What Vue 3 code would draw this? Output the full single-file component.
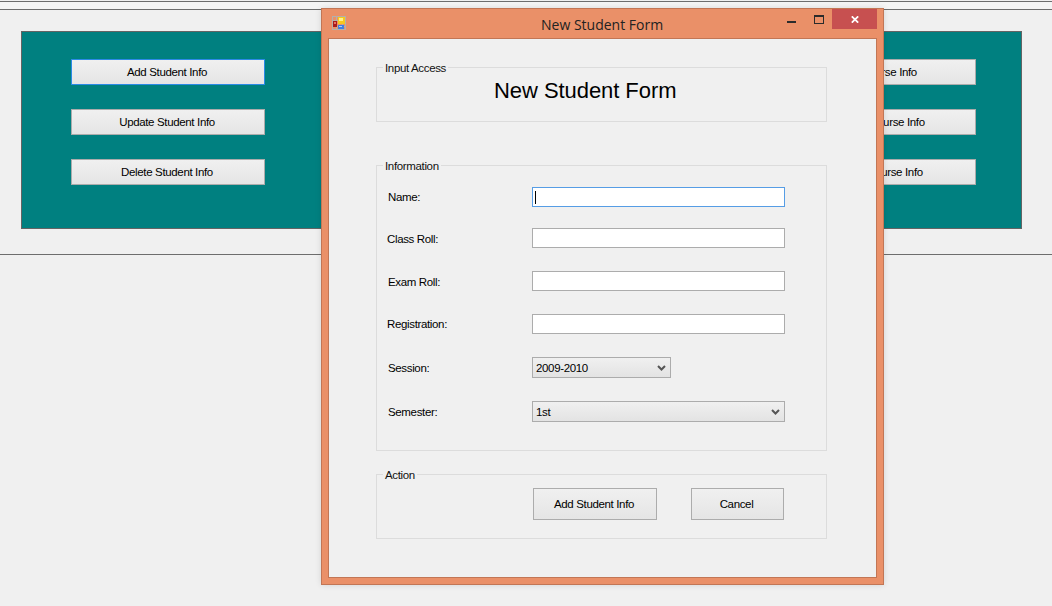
<template>
  <div class="page">
    <div class="menu-strip"></div>

    <div class="top-area">
      <div class="teal-panel">
        <div v-for="col in panelColumns" :key="col.id" class="btn-col">
          <div
            v-for="b in col.buttons"
            :key="b"
            class="win-btn panel-btn"
            :class="{ 'win-btn--focus': b === 'Add Student Info' }"
          >
            {{ b }}
          </div>
        </div>
      </div>
    </div>

    <!-- Modal window -->
    <div class="window">
      <div class="titlebar">
        <svg class="app-icon" width="14" height="14" viewBox="0 0 14 14">
          <rect x="0.5" y="0.5" width="13" height="13" fill="none" stroke="#b4b0aa" />
          <path d="M0 4.5H14M0 10.5H14M4.5 0V14M10.5 0V14" stroke="#b4b0aa" fill="none" />
          <rect x="1" y="5" width="4" height="6" fill="#a81c1c" />
          <rect x="2" y="6" width="2" height="2" fill="#e87060" />
          <rect x="6" y="1" width="7" height="7" fill="#f6c81e" />
          <rect x="7" y="2" width="4" height="3" fill="#fff08a" />
          <rect x="6" y="9" width="6" height="4" fill="#3f7fe0" />
          <rect x="7" y="10" width="3" height="1" fill="#a8ccf6" />
        </svg>
        <span class="window-title">New Student Form</span>
        <div class="caption-btns">
          <svg class="cap-min" width="9" height="2" viewBox="0 0 9 2">
            <rect width="9" height="2" fill="#2b2b2b" />
          </svg>
          <svg class="cap-max" width="10" height="9" viewBox="0 0 10 9">
            <rect x="0.5" y="0.5" width="9" height="8" fill="none" stroke="#2b2b2b" />
            <rect x="0" y="0" width="10" height="2" fill="#2b2b2b" />
          </svg>
          <div class="cap-close">
            <svg width="8" height="7" viewBox="0 0 8 7">
              <path d="M0.8 0.3L7.2 6.7M7.2 0.3L0.8 6.7" stroke="#fff" stroke-width="1.7" fill="none" />
            </svg>
          </div>
        </div>
      </div>

      <div class="client">
        <div class="group group--access">
          <span class="group-label">Input Access</span>
          <div class="form-heading">New Student Form</div>
        </div>

        <div class="group group--info">
          <span class="group-label">Information</span>
          <div class="form-grid">
            <template v-for="f in fields" :key="f.label">
              <div class="field-label" :class="{ 'field-label--up': f.up, 'field-label--left': f.left }">{{ f.label }}</div>
              <div v-if="f.type === 'text'" class="text-box" :class="{ 'text-box--focus': f.focus }">
                <span v-if="f.focus" class="caret"></span>
              </div>
              <div v-else class="combo" :class="{ 'combo--short': f.short }">
                <span>{{ f.value }}</span>
                <svg width="9" height="6" viewBox="0 0 9 6">
                  <path d="M1 1L4.5 4.5L8 1" stroke="#555" stroke-width="2" fill="none" />
                </svg>
              </div>
            </template>
          </div>
        </div>

        <div class="group group--action">
          <span class="group-label">Action</span>
          <div class="win-btn action-btn action-btn--add">Add Student Info</div>
          <div class="win-btn action-btn action-btn--cancel">Cancel</div>
        </div>
      </div>
    </div>
  </div>
</template>

<script setup>
const panelColumns = [
  { id: 'student', buttons: ['Add Student Info', 'Update Student Info', 'Delete Student Info'] },
  { id: 'course', buttons: ['Add Course Info', 'Update Course Info', 'Delete Course Info'] },
]

const fields = [
  { label: 'Name:', type: 'text', focus: true, up: true },
  { label: 'Class Roll:', type: 'text', left: true },
  { label: 'Exam Roll:', type: 'text' },
  { label: 'Registration:', type: 'text', up: true, left: true },
  { label: 'Session:', type: 'combo', value: '2009-2010', short: true },
  { label: 'Semester:', type: 'combo', value: '1st' },
]
</script>

<style>
html, body { margin: 0; background: #f0f0f0; overflow: hidden; }
</style>

<style scoped>
.page {
  position: relative;
  width: 1052px;
  height: 606px;
  background: #f0f0f0;
  font-family: "Liberation Sans", Arial, sans-serif;
  font-size: 11.5px;
  letter-spacing: -0.35px;
  color: #000;
  overflow: hidden;
}

.menu-strip {
  height: 8px;
  margin-top: 1px;
  box-sizing: border-box;
  background: #f5f5f5;
  border-top: 1px solid #6d6d6d;
}

.top-area {
  height: 246px;
  box-sizing: border-box;
  padding: 21px 30px 0 21px;
  border-top: 1px solid #6d6d6d;
  border-bottom: 1px solid #6d6d6d;
}

.teal-panel {
  height: 198px;
  box-sizing: border-box;
  background: #008080;
  border: 1px solid #646464;
  padding: 27px 45px 0 49px;
  display: flex;
  justify-content: space-between;
}

.btn-col { display: flex; flex-direction: column; gap: 24px; }

.win-btn {
  box-sizing: border-box;
  display: flex;
  align-items: center;
  justify-content: center;
  padding-right: 2px;
  background: linear-gradient(#f0f0f0, #e5e5e5);
  border: 1px solid #acacac;
}
.win-btn--focus { border-color: #2b8ae6; }

.panel-btn { width: 194px; height: 26px; }

.window {
  position: absolute;
  left: 321px;
  top: 8px;
  width: 563px;
  height: 577px;
  box-sizing: border-box;
  background: #ea9068;
  border: 1px solid #c27655;
  box-shadow: 0 0 6px rgba(0, 0, 0, 0.12);
  display: flex;
  flex-direction: column;
  padding: 0 6px 6px;
}

.titlebar {
  height: 29px;
  flex: none;
  display: flex;
  align-items: flex-start;
  position: relative;
}
.app-icon { margin: 7px 0 0 4px; }
.window-title {
  position: absolute;
  left: 213px;
  top: 6px;
  font-family: "Open Sans", "Noto Sans", sans-serif;
  font-size: 14px;
  letter-spacing: 0;
  line-height: 19px;
  color: #222;
}
.caption-btns {
  position: absolute;
  right: 0;
  top: 0;
  display: flex;
  align-items: flex-start;
}
.cap-min { margin-top: 12px; margin-right: 18px; }
.cap-max { margin-top: 6px; margin-right: 8px; }
.cap-close {
  width: 45px;
  height: 20px;
  background: #c75050;
  display: flex;
  align-items: center;
  justify-content: center;
}

.client {
  flex: 1;
  box-sizing: border-box;
  background: #f0f0f0;
  border: 1px solid #c27655;
  padding: 28px 0 0 47px;
}

.group {
  position: relative;
  width: 451px;
  box-sizing: border-box;
  border: 1px solid #dcdcdc;
}
.group-label {
  position: absolute;
  left: 6px;
  top: -7px;
  padding: 0 2px;
  line-height: 14px;
  background: #f0f0f0;
  color: #111;
}

.group--access { height: 55px; }
.form-heading {
  font-size: 22px;
  letter-spacing: -0.06px;
  line-height: 26px;
  margin: 10px 0 0 117px;
  color: #000;
}

.group--info {
  height: 286px;
  margin-top: 43px;
  padding: 21px 0 0 11px;
}
.form-grid {
  display: grid;
  grid-template-columns: 144px 253px;
  grid-template-rows: 41px 43px 43px 43px 44px 21px;
}
.field-label { line-height: 22px; }
.field-label--up { line-height: 20px; }
.field-label--left { margin-left: -1px; }

.text-box {
  box-sizing: border-box;
  height: 20px;
  background: #fff;
  border: 1px solid #acacac;
  position: relative;
}
.text-box--focus { border-color: #569de5; }
.caret {
  position: absolute;
  left: 2px;
  top: 3px;
  width: 1px;
  height: 13px;
  background: #000;
}

.combo {
  box-sizing: border-box;
  height: 21px;
  display: flex;
  align-items: center;
  justify-content: space-between;
  padding: 0 4px 0 3px;
  background: linear-gradient(#f0f0f0, #e3e3e3);
  border: 1px solid #acacac;
}
.combo--short { width: 139px; }

.group--action {
  height: 65px;
  margin-top: 23px;
  display: flex;
  align-items: flex-start;
  padding-top: 13px;
}
.action-btn { height: 32px; }
.action-btn--add { width: 124px; margin-left: 156px; }
.action-btn--cancel { width: 93px; margin-left: 34px; }
</style>
